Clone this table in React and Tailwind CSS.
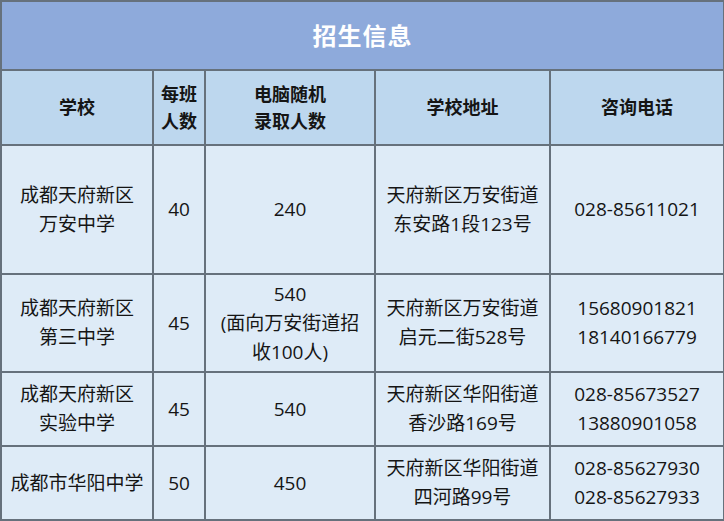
const rows = [
  {
    h: 'h-[129px]',
    school: ['成都天府新区', '万安中学'],
    perClass: '40',
    quota: ['240'],
    addr: ['天府新区万安街道', '东安路1段123号'],
    phone: ['028-85611021'],
  },
  {
    h: 'h-[98px]',
    school: ['成都天府新区', '第三中学'],
    perClass: '45',
    quota: ['540', '(面向万安街道招', '收100人)'],
    addr: ['天府新区万安街道', '启元二街528号'],
    phone: ['15680901821', '18140166779'],
  },
  {
    h: 'h-[74px]',
    school: ['成都天府新区', '实验中学'],
    perClass: '45',
    quota: ['540'],
    addr: ['天府新区华阳街道', '香沙路169号'],
    phone: ['028-85673527', '13880901058'],
  },
  {
    h: 'h-[74px]',
    school: ['成都市华阳中学'],
    perClass: '50',
    quota: ['450'],
    addr: ['天府新区华阳街道', '四河路99号'],
    phone: ['028-85627930', '028-85627933'],
  },
];

const cell = 'border-2 border-[#66717c] text-center align-middle p-0';

function Lines({ items }) {
  return items.map((t, i) => (
    <div key={i} className="whitespace-nowrap">
      {t}
    </div>
  ));
}

export default function App() {
  return (
    <div
      className="w-[724px] h-[521px] overflow-hidden bg-[#deebf7] text-[#151515]"
      style={{ fontFamily: '"Open Sans", "Noto Sans CJK SC", sans-serif' }}
    >
      <table className="w-[723px] table-fixed border-collapse">
        <colgroup>
          <col className="w-[152px]" />
          <col className="w-[52px]" />
          <col className="w-[170px]" />
          <col className="w-[175px]" />
          <col className="w-[174px]" />
        </colgroup>
        <thead>
          <tr className="h-[69px] bg-[#8eaadb]">
            <th colSpan={5} className={`${cell} text-white text-[24px] font-bold tracking-[1px]`}>
              招生信息
            </th>
          </tr>
          <tr className="h-[75px] bg-[#bdd7ee] text-[18px] font-bold leading-[27px]">
            <th className={cell}>学校</th>
            <th className={cell}>
              <div>每班</div>
              <div>人数</div>
            </th>
            <th className={cell}>
              <div>电脑随机</div>
              <div>录取人数</div>
            </th>
            <th className={cell}>学校地址</th>
            <th className={cell}>咨询电话</th>
          </tr>
        </thead>
        <tbody className="text-[19px] leading-[29px]">
          {rows.map((r, i) => (
            <tr key={i} className={`${r.h} bg-[#deebf7]`}>
              <td className={cell}>
                <Lines items={r.school} />
              </td>
              <td className={cell}>{r.perClass}</td>
              <td className={cell}>
                <Lines items={r.quota} />
              </td>
              <td className={cell}>
                <Lines items={r.addr} />
              </td>
              <td className={cell}>
                <Lines items={r.phone} />
              </td>
            </tr>
          ))}
        </tbody>
      </table>
    </div>
  );
}
